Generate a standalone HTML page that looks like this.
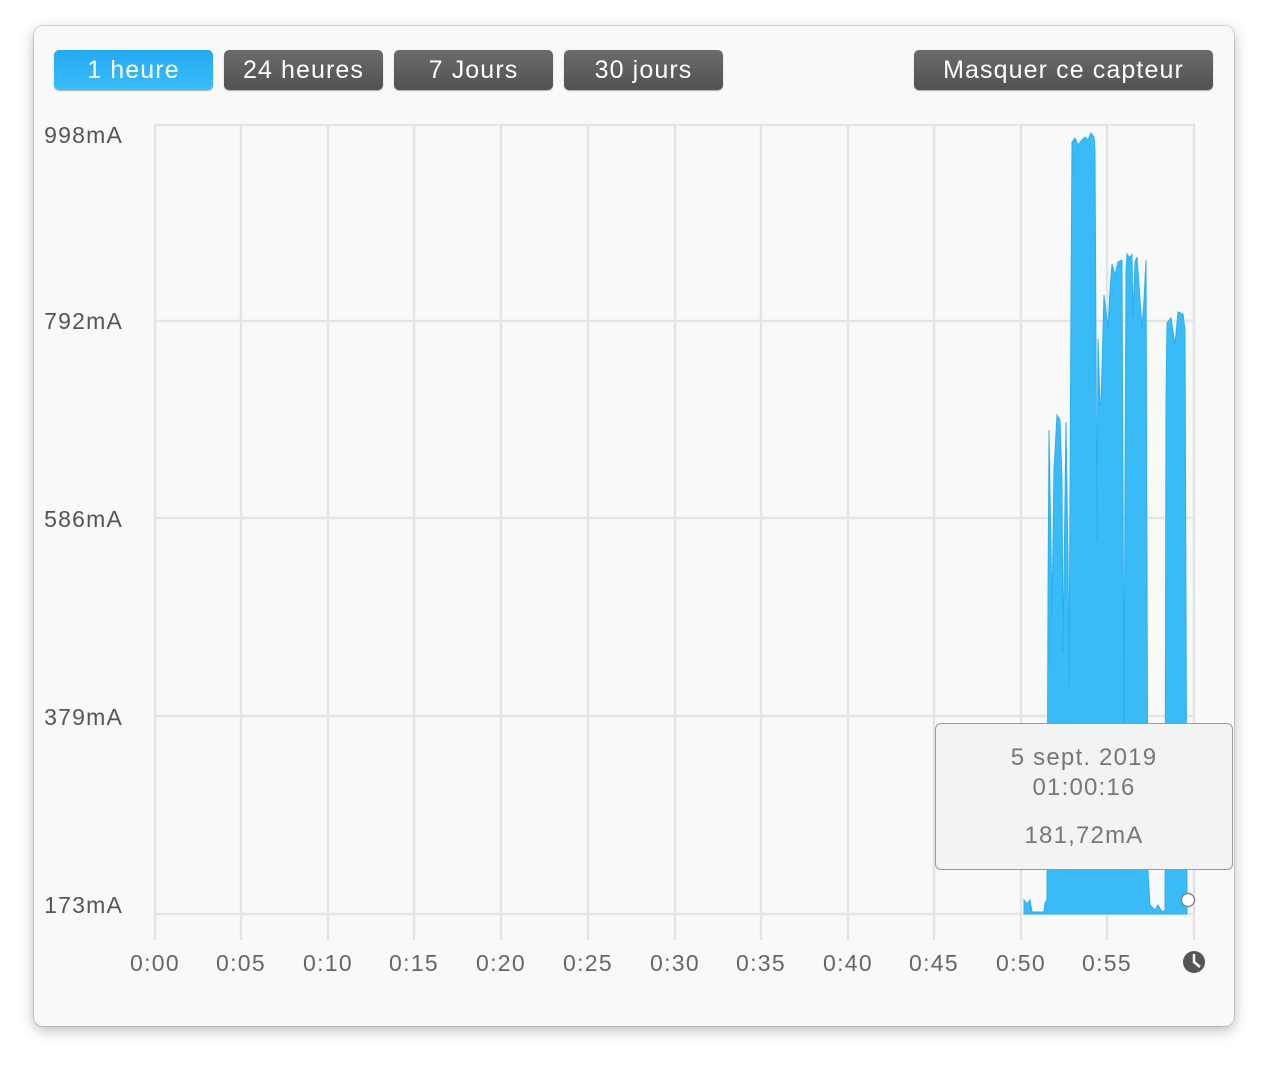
<!DOCTYPE html>
<html><head><meta charset="utf-8"><style>
body{margin:0;width:1268px;height:1068px;background:#fff;font-family:"Liberation Sans",sans-serif;position:relative;overflow:hidden}
.panel{position:absolute;left:34px;top:26px;width:1200px;height:1000px;background:#f9f9f9;border-radius:9px;box-shadow:0 4px 14px rgba(0,0,0,.28),0 0 0 1px rgba(0,0,0,.12)}
.b{position:absolute;top:50px;height:40px;line-height:40px;text-align:center;color:#fff;font-size:25px;letter-spacing:1.1px;border-radius:5px;background:linear-gradient(#6b6b6b,#525252);box-shadow:0 1px 1px rgba(0,0,0,.3)}
.b.on{background:linear-gradient(#22a9f5,#3bbcfb)}
.yl{position:absolute;right:1145px;font-size:23px;letter-spacing:1.2px;color:#555;text-align:right}
.xl{position:absolute;top:950px;font-size:23px;letter-spacing:1.3px;color:#666;width:80px;margin-left:-40px;text-align:center}
.tip{position:absolute;left:935px;top:723px;width:296px;height:145px;background:#f3f3f3;border:1px solid #9a9a9a;border-radius:6px;text-align:center;color:#777;font-size:24px;letter-spacing:1.2px}
</style></head><body>
<div class="panel"></div>
<div class="b on" style="left:54px;width:159px">1 heure</div>
<div class="b" style="left:224px;width:159px">24 heures</div>
<div class="b" style="left:394px;width:159px">7 Jours</div>
<div class="b" style="left:564px;width:159px">30 jours</div>
<div class="b" style="left:914px;width:299px">Masquer ce capteur</div>
<svg style="position:absolute;left:0;top:0" width="1268" height="1068">
<g stroke="#e4e4e4" stroke-width="2.5">
<line x1="155" y1="125" x2="1195" y2="125"/><line x1="155" y1="321" x2="1195" y2="321"/><line x1="155" y1="518" x2="1195" y2="518"/><line x1="155" y1="716" x2="1195" y2="716"/><line x1="155" y1="914" x2="1195" y2="914"/>
<line x1="155" y1="125" x2="155" y2="940"/><line x1="241" y1="125" x2="241" y2="940"/><line x1="328" y1="125" x2="328" y2="940"/><line x1="414" y1="125" x2="414" y2="940"/><line x1="501" y1="125" x2="501" y2="940"/><line x1="588" y1="125" x2="588" y2="940"/><line x1="675" y1="125" x2="675" y2="940"/><line x1="761" y1="125" x2="761" y2="940"/><line x1="848" y1="125" x2="848" y2="940"/><line x1="934" y1="125" x2="934" y2="940"/><line x1="1021" y1="125" x2="1021" y2="940"/><line x1="1107" y1="125" x2="1107" y2="940"/><line x1="1194" y1="125" x2="1194" y2="940"/>
</g>
<polygon fill="#38bbf7" stroke="#2eaef0" stroke-width="1" points="1024,914 1024,900 1027,904 1030,900 1032,912 1044,912 1045,903 1047,900 1048,600 1049,430 1051,550 1052,614 1054,470 1057,415 1060,420 1062,480 1063,652 1065,500 1066,422 1068,560 1069,685 1071,300 1072,142 1075,138 1078,145 1082,140 1085,137 1088,140 1091,133 1094,137 1095,150 1097,542 1098,339 1100,405 1101,405 1103,330 1104,295 1108,328 1110,290 1112,264 1115,275 1118,262 1122,260 1124,723 1126,270 1127,254 1130,258 1132,254 1133,317 1135,262 1137,257 1140,300 1142,328 1144,300 1146,260 1148,871 1150,905 1155,910 1158,905 1162,912 1165,910 1166,400 1167,323 1171,318 1175,345 1178,312 1183,314 1185,330 1187,888 1187,914"/>
<circle cx="1188" cy="900" r="6.5" fill="#fff" stroke="#888" stroke-width="1.5"/>
<circle cx="1194" cy="962" r="11" fill="#555"/>
<path d="M1194 954 V962 L1200 967" stroke="#f9f9f9" stroke-width="2.5" fill="none"/>
</svg>
<div class="yl" style="top:122px">998mA</div>
<div class="yl" style="top:308px">792mA</div>
<div class="yl" style="top:506px">586mA</div>
<div class="yl" style="top:704px">379mA</div>
<div class="yl" style="top:892px">173mA</div>
<div class="xl" style="left:155px">0:00</div><div class="xl" style="left:241px">0:05</div><div class="xl" style="left:328px">0:10</div><div class="xl" style="left:414px">0:15</div><div class="xl" style="left:501px">0:20</div><div class="xl" style="left:588px">0:25</div><div class="xl" style="left:675px">0:30</div><div class="xl" style="left:761px">0:35</div><div class="xl" style="left:848px">0:40</div><div class="xl" style="left:934px">0:45</div><div class="xl" style="left:1021px">0:50</div><div class="xl" style="left:1107px">0:55</div>
<div class="tip"><div style="margin-top:19px;line-height:30px">5 sept. 2019<br>01:00:16</div><div style="margin-top:19px">181,72mA</div></div>
</body></html>
